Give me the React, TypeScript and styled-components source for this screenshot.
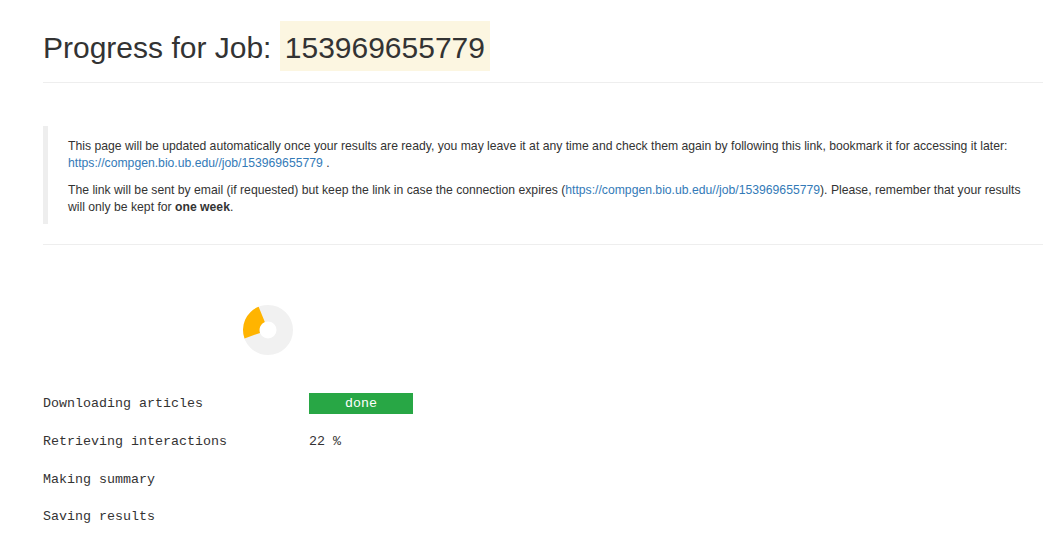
import React from "react";
import styled, { createGlobalStyle } from "styled-components";

const GlobalStyle = createGlobalStyle`
  body {
    margin: 0;
    background: #fff;
    color: #333;
    font-family: "Liberation Sans", Arial, sans-serif;
  }
`;

const Page = styled.div`
  width: 1000px;
  margin-left: 43px;
`;

const Header = styled.div`
  border-bottom: 1px solid #eee;
`;

const Title = styled.h1`
  margin: 21px 0 7px;
  font-size: 30px;
  font-weight: 400;
  line-height: 54px;
  color: #333;
`;

const JobId = styled.mark`
  display: inline-block;
  vertical-align: top;
  padding: 4px 5px 0;
  line-height: 46px;
  background: #fcf6e1;
  color: #333;
`;

const Notice = styled.blockquote`
  margin: 43px 0 20px;
  padding: 12px 20px 8px;
  border-left: 5px solid #eee;
  font-size: 12.2px;
  line-height: 17px;

  p {
    margin: 0 0 10px;
  }
  p:last-child {
    margin-bottom: 0;
  }
  a {
    color: #337ab7;
    text-decoration: none;
  }
`;

const Divider = styled.hr`
  margin: 0;
  border: 0;
  border-top: 1px solid #eee;
`;

const ChartWrap = styled.div`
  padding: 60px 0 0 200px;
  height: 50px;

  svg {
    display: block;
  }
`;

const Steps = styled.div`
  margin-top: 29px;
  font-family: "Liberation Mono", "DejaVu Sans Mono", monospace;
  font-size: 13.33px;
  color: #333;
`;

const Step = styled.div`
  display: grid;
  grid-template-columns: 266px 104px;
  align-items: center;
  height: 38px;

  &:last-child {
    height: 37px;
  }
`;

const Status = styled.span<{ $done?: boolean }>`
  height: 21px;
  line-height: 21px;
  text-align: ${(p) => (p.$done ? "center" : "left")};
  background: ${(p) => (p.$done ? "#28a745" : "transparent")};
  color: ${(p) => (p.$done ? "#fff" : "#333")};
`;

const jobUrl = "https://compgen.bio.ub.edu//job/153969655779";

// ring slice between two angles, clockwise from top, in degrees
const slice = (from: number, to: number, r: number, ri: number, c: number) => {
  const pt = (deg: number, rad: number) => {
    const a = (deg * Math.PI) / 180;
    return `${(c + rad * Math.sin(a)).toFixed(2)} ${(c - rad * Math.cos(a)).toFixed(2)}`;
  };
  const large = to - from > 180 ? 1 : 0;
  return `M ${pt(from, r)} A ${r} ${r} 0 ${large} 1 ${pt(to, r)} L ${pt(to, ri)} A ${ri} ${ri} 0 ${large} 0 ${pt(from, ri)} Z`;
};

const Donut = () => (
  <svg width="50" height="50" viewBox="0 0 50 50">
    <circle cx="25" cy="25" r="16.75" fill="none" stroke="#f1f1f1" strokeWidth="16.5" />
    <path d={slice(250, 338, 25, 8.5, 25)} fill="#ffb400" />
  </svg>
);

const steps: { label: string; status?: string; done?: boolean }[] = [
  { label: "Downloading articles", status: "done", done: true },
  { label: "Retrieving interactions", status: "22 %" },
  { label: "Making summary" },
  { label: "Saving results" },
];

const App = () => (
  <>
    <GlobalStyle />
    <Page>
      <Header>
        <Title>
          Progress for Job: <JobId>153969655779</JobId>
        </Title>
      </Header>
      <Notice>
        <p>
          This page will be updated automatically once your results are ready, you may leave it at any time and
          check them again by following this link, bookmark it for accessing it later:{" "}
          <a href={jobUrl}>{jobUrl}</a> .
        </p>
        <p>
          The link will be sent by email (if requested) but keep the link in case the connection expires (
          <a href={jobUrl}>{jobUrl}</a>). Please, remember that your results will only be kept for{" "}
          <b>one week</b>.
        </p>
      </Notice>
      <Divider />
      <ChartWrap>
        <Donut />
      </ChartWrap>
      <Steps>
        {steps.map((s) => (
          <Step key={s.label}>
            <span>{s.label}</span>
            {s.status ? <Status $done={s.done}>{s.status}</Status> : <span />}
          </Step>
        ))}
      </Steps>
    </Page>
  </>
);

export default App;
